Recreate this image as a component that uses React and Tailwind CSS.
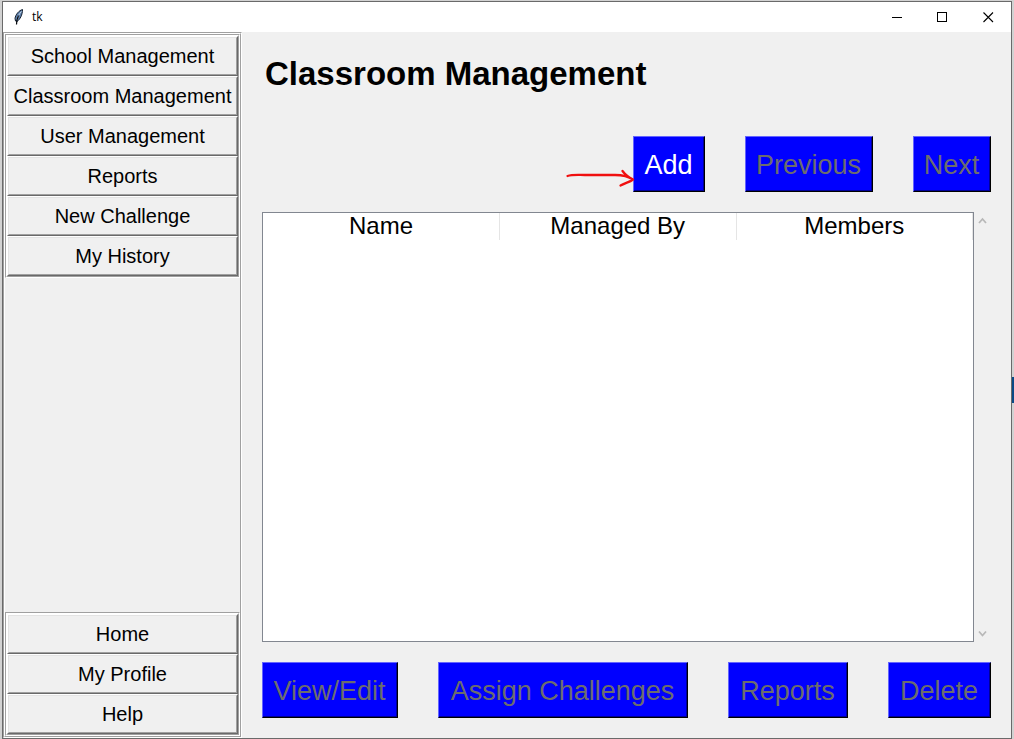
const mainLinks = ['School Management', 'Classroom Management', 'User Management', 'Reports', 'New Challenge', 'My History'];
const accountLinks = ['Home', 'My Profile', 'Help'];

function Groove({ className = '', innerClassName = '', children }) {
  return (
    <div className={`border border-t-[#a0a0a0] border-l-[#a0a0a0] border-r-white border-b-white ${className}`}>
      <div className={`border border-t-white border-l-white border-r-[#a0a0a0] border-b-[#a0a0a0] ${innerClassName}`}>
        {children}
      </div>
    </div>
  );
}

function NavGroup({ items, label }) {
  return (
    <Groove>
      <nav aria-label={label} className="flex flex-col">
        {items.map((item) => (
          <button
            key={item}
            type="button"
            className="h-10 border border-t-white border-l-white border-r-[#696969] border-b-[#696969] bg-[#f0f0f0]"
          >
            <span className="flex h-full items-center justify-center border border-t-[#e3e3e3] border-l-[#e3e3e3] border-r-[#a0a0a0] border-b-[#a0a0a0] text-[20px] leading-6 whitespace-nowrap">
              {item}
            </span>
          </button>
        ))}
      </nav>
    </Groove>
  );
}

function ActionButton({ children, width, disabled = false }) {
  return (
    <button
      type="button"
      disabled={disabled}
      className={`h-14 border border-t-[#6464ff] border-l-[#6464ff] border-r-black border-b-black bg-[#0000ff] text-[27px] leading-8 whitespace-nowrap text-white disabled:text-[#6d6d6d] ${width}`}
    >
      <span className="flex h-full items-center justify-center border-r border-b border-[#000099] pt-[2px]">{children}</span>
    </button>
  );
}

function Feather() {
  return (
    <svg width="12" height="16" viewBox="0 0 12 16" aria-hidden="true">
      <path d="M9.5 0.5C6 1.5 2.5 5.5 2 9.5L2.5 12L4 12.5C7 10.5 9.5 6 9.5 0.5Z" fill="#5d80ad" stroke="#14202f" strokeWidth="1" />
      <path d="M8.5 2.5C6 5 4.5 8 3.8 11" fill="none" stroke="#c9d8e8" strokeWidth="1" />
      <path d="M5.5 6.5C4 9.5 3.5 12 3.5 15.5" fill="none" stroke="#05080c" strokeWidth="1.2" />
    </svg>
  );
}

function TitleBar() {
  return (
    <header className="flex h-[30px] shrink-0 items-center bg-white pl-[10px]">
      <Feather />
      <span className="ml-[7px] flex-1 font-['Open_Sans',sans-serif] text-[12px] leading-4">tk</span>
      <button type="button" aria-label="Minimize" className="flex h-full w-[46px] items-center justify-center">
        <svg width="11" height="11" viewBox="0 0 11 11" shapeRendering="crispEdges">
          <path d="M1 5.5H11" stroke="#000" />
        </svg>
      </button>
      <button type="button" aria-label="Maximize" className="flex h-full w-[46px] items-center justify-center">
        <svg width="11" height="11" viewBox="0 0 11 11" shapeRendering="crispEdges">
          <path d="M0.5 0.5H9.5V9.5H0.5Z" fill="none" stroke="#000" />
        </svg>
      </button>
      <button type="button" aria-label="Close" className="flex h-full w-[46px] items-center justify-center">
        <svg width="11" height="11" viewBox="0 0 11 11">
          <path d="M0.5 0.5L10 10M10 0.5L0.5 10" stroke="#000" strokeWidth="1.1" />
        </svg>
      </button>
    </header>
  );
}

export default function App() {
  return (
    <div className="relative flex h-screen min-h-[560px] bg-[#d2d2d2] pt-px pr-[2px] pl-[2px] font-['Liberation_Sans',Arial,sans-serif] text-black">
      <div className="absolute top-[377px] right-0 h-[26px] w-[3px] bg-[#0a4a86]" />
      <div className="relative flex min-w-0 flex-1 flex-col border border-[#6a6a6a] bg-[#f0f0f0]">
        <TitleBar />
        <div className="flex min-h-0 flex-1">
          <aside className="flex w-[239px] shrink-0">
            <Groove className="flex flex-1" innerClassName="flex flex-1 flex-col justify-between">
              <NavGroup items={mainLinks} label="Main" />
              <NavGroup items={accountLinks} label="Account" />
            </Groove>
          </aside>
          <main className="flex min-w-0 flex-1 flex-col gap-5 p-5">
            <h1 className="h-16 pl-[3px] text-[33px] leading-[44px] font-bold whitespace-nowrap">Classroom Management</h1>
            <div className="flex justify-end gap-10">
              <div className="relative flex">
                <ActionButton width="w-[72px]">Add</ActionButton>
                <svg className="absolute top-8 right-full -mr-[2px]" width="70" height="22" viewBox="0 0 70 22" aria-hidden="true">
                  <path d="M2.5 8C7 6.500 12 7 20 7H50C57 7 63 8 68 11.500M57.500 3C60 6.500 64 9.500 68 11.500M68 11.500C65 14 60 15 55.500 17.500" fill="none" stroke="#f01010" strokeWidth="2.300" strokeLinecap="round" strokeLinejoin="round" />
                </svg>
              </div>
              <ActionButton width="w-32" disabled>Previous</ActionButton>
              <ActionButton width="w-[78px]" disabled>Next</ActionButton>
            </div>
            <div className="flex min-h-0 flex-1">
              <div className="flex-1 border border-[#828790] bg-white">
                <table className="w-full table-fixed border-collapse">
                  <thead>
                    <tr>
                      {['Name', 'Managed By', 'Members'].map((name) => (
                        <th key={name} scope="col" className="border-r border-[#e5e5e5] p-0 pb-px text-center text-[24px] leading-[26px] font-normal">
                          {name}
                        </th>
                      ))}
                    </tr>
                  </thead>
                </table>
              </div>
              <div className="flex w-[17px] flex-col items-center justify-between py-[5px]">
                <svg width="9" height="7" viewBox="0 0 9 7" aria-hidden="true">
                  <path d="M1 6L4.500 2L8 6" fill="none" stroke="#b8b8b8" strokeWidth="1.800" />
                </svg>
                <svg width="9" height="7" viewBox="0 0 9 7" aria-hidden="true">
                  <path d="M1 1.500L4.500 5.500L8 1.500" fill="none" stroke="#b8b8b8" strokeWidth="1.800" />
                </svg>
              </div>
            </div>
            <div className="flex justify-between">
              <ActionButton width="w-[136px]" disabled>View/Edit</ActionButton>
              <ActionButton width="w-[250px]" disabled>Assign Challenges</ActionButton>
              <ActionButton width="w-[120px]" disabled>Reports</ActionButton>
              <ActionButton width="w-[103px]" disabled>Delete</ActionButton>
            </div>
          </main>
        </div>
      </div>
    </div>
  );
}
